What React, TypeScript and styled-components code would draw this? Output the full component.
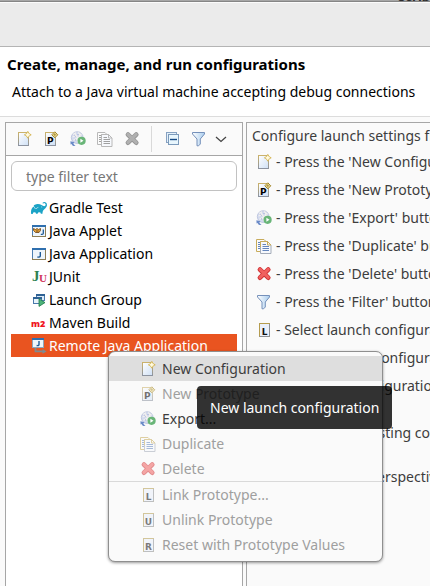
import React, { useState } from "react";
import styled, { createGlobalStyle, css } from "styled-components";
import { SiGradle } from "react-icons/si";

const GlobalStyle = createGlobalStyle`
  *, *::before, *::after { box-sizing: border-box; }
  html, body, #root { height: 100%; margin: 0; }
  body {
    background: #fafafa;
    color: #3d3d3d;
    font-family: "Noto Sans", "Open Sans", sans-serif;
    font-size: 14px;
    line-height: 20px;
    overflow: hidden;
  }
  button, input { font: inherit; color: inherit; }
`;

/* ---------- icons ---------- */

const Svg = styled.svg`
  display: block;
  flex: none;
  width: 16px;
  height: 16px;
`;

type IconProps = { muted?: boolean };

const Star = ({ x, y }: { x: number; y: number }) => (
  <g>
    <path
      d={`M${x} ${y - 3.4}L${x + 1.2} ${y - 1.2}L${x + 3.4} ${y}L${x + 1.2} ${y + 1.2}L${x} ${y + 3.4}L${x - 1.2} ${y + 1.2}L${x - 3.4} ${y}L${x - 1.2} ${y - 1.2}Z`}
      fill="#fdf3c4"
      stroke="#d3b250"
      strokeWidth=".9"
    />
    <path d={`M${x} ${y - 2}V${y + 2}M${x - 2} ${y}H${x + 2}`} stroke="#fffbe8" strokeWidth="1" />
  </g>
);

const Sheet = () => (
  <>
    <defs>
      <linearGradient id="sheetFill" x1="0" y1="0" x2="1" y2="1">
        <stop offset="0" stopColor="#ffffff" />
        <stop offset="1" stopColor="#cfe0f5" />
      </linearGradient>
      <linearGradient id="sheetLine" x1="0" y1="0" x2="0" y2="1">
        <stop offset="0" stopColor="#cbb26b" />
        <stop offset="1" stopColor="#8c93a0" />
      </linearGradient>
    </defs>
    <rect x="2.5" y="1.5" width="10" height="13" fill="url(#sheetFill)" stroke="url(#sheetLine)" />
  </>
);

const NewIcon = () => (
  <Svg viewBox="0 0 16 16" aria-hidden="true">
    <Sheet />
    <Star x={11.8} y={3.8} />
  </Svg>
);

const PrototypeIcon = () => (
  <Svg viewBox="0 0 16 16" aria-hidden="true">
    <Sheet />
    <text x="4" y="13" fontFamily="DejaVu Sans" fontWeight="700" fontSize="9" fill="#000">
      P
    </text>
    <path d="M11.8 .8L14.8 3.8L11.8 6.8L8.8 3.8Z" fill="#fdf3b0" stroke="#9a7a1c" strokeWidth=".9" />
    <path d="M11.8 2V5.6M10 3.8H13.6" stroke="#9a7a1c" strokeWidth=".7" />
  </Svg>
);

const LetterIcon = ({ letter }: { letter: string }) => (
  <Svg viewBox="0 0 16 16" aria-hidden="true">
    <rect x="3.5" y="1.5" width="10" height="13" fill="#eaf0fb" stroke="#b59c4e" />
    <path d="M13.5 2V14.5H3.5" fill="none" stroke="#8c8f94" />
    <text x="8.5" y="13" textAnchor="middle" fontFamily="DejaVu Sans" fontWeight="700" fontSize="9" fill="#111">
      {letter}
    </text>
  </Svg>
);

const ExportIcon = () => (
  <Svg viewBox="0 0 16 16" aria-hidden="true">
    <circle cx="7.2" cy="6.6" r="5.9" fill="#d3daee" stroke="#b6bfdb" strokeWidth=".8" />
    <path
      d="M3 3.5L6 1.6M8 1.5L11.5 4.3M2.6 6L6 4.4L8 7L11 5.6M3.4 9.2L6.6 7.6L8 11M5 2.5L7 5.5M10 2.5L9 6.5"
      stroke="#f3f1ee"
      strokeWidth="1.1"
      fill="none"
    />
    <path d="M4.5 4.5l1 1M7.5 3l1 1M9.5 7l1 1M5 8.5l1.2 1" stroke="#a4afd2" strokeWidth="1" />
    <path d="M.4 10.2L4.6 11.2L3.4 12.2C3.6 13.4 4.6 14.4 6 14.8C3.4 15.3 1.8 14.4 1.7 12.9L.6 13.6Z" fill="#6b8bc8" />
    <circle cx="11.6" cy="9.8" r="4.1" fill="#69b578" />
    <path d="M10.4 7.8L13.5 9.8L10.4 11.8Z" fill="#fff" />
  </Svg>
);

const DuplicateIcon = ({ muted }: IconProps) => {
  const edge = muted ? "#b8b8b8" : "#c8ac5c";
  const side = muted ? "#b8b8b8" : "#a3abb8";
  const line = muted ? "#a0a0a0" : "#6486bd";
  return (
    <Svg viewBox="0 0 16 16" aria-hidden="true">
      <path d="M.5 13.5V1.5H8L10 3.5V13.5Z" fill="#fbfbfb" stroke={edge} />
      <path d="M2 4.5H4M2 6.5H4M2 8.5H4M2 10.5H4" stroke={line} />
      <path d="M4.5 15.5V3.5H11.5L15 7V15.5Z" fill="#f7f9fd" stroke={side} />
      <path d="M4.5 9V3.5H11.5L15 7H11.5V3.5" fill="none" stroke={edge} />
      <path d="M6.5 6.5H10M6.5 8.5H13M6.5 10.5H13M6.5 12.5H13" stroke={line} />
    </Svg>
  );
};

const DeleteIcon = ({ muted }: IconProps) => (
  <Svg viewBox="0 0 16 16" aria-hidden="true">
    <path
      d="M4 3.6L12.2 11.6M12.2 3.6L4 11.6"
      stroke={muted ? "#969696" : "#cf3235"}
      strokeWidth="4.8"
      strokeLinecap="round"
    />
    <path
      d="M4 3.4L12.2 11.4M12.2 3.4L4 11.4"
      stroke={muted ? "#b0b0b0" : "#f0605f"}
      strokeWidth="3"
      strokeLinecap="round"
    />
  </Svg>
);

const CollapseIcon = () => (
  <Svg viewBox="0 0 16 16" aria-hidden="true">
    <rect x="2.5" y="1.5" width="10" height="10" fill="#e4f0fa" stroke="#86a1c1" />
    <rect x="4.5" y="3.5" width="10" height="10" fill="#e8f6fd" stroke="#7c9abb" />
    <path d="M6 8.5H13" stroke="#164a86" strokeWidth="1.4" />
  </Svg>
);

const FilterIcon = () => (
  <Svg viewBox="0 0 16 16" aria-hidden="true">
    <defs>
      <linearGradient id="funnelFill">
        <stop offset="0" stopColor="#ffffff" />
        <stop offset="1" stopColor="#a9cdee" />
      </linearGradient>
    </defs>
    <path
      d="M1.5 1.5H13.5V3L9.3 8V13L7.6 14.8H6V8L1.5 3Z"
      fill="url(#funnelFill)"
      stroke="#7590ba"
      strokeLinejoin="round"
    />
  </Svg>
);

const ChevronIcon = () => (
  <Svg viewBox="0 0 16 16" aria-hidden="true">
    <path d="M3 6L8 10.4L13 6" fill="none" stroke="#444" strokeWidth="1.3" />
  </Svg>
);

const GradleIcon = styled(SiGradle)`
  display: block;
  flex: none;
  width: 16px;
  height: 16px;
  color: #1ba3c6;
`;

const WindowFrame = () => (
  <>
    <rect x="1.5" y="2.5" width="13" height="11" fill="#eef5fb" stroke="#8c7d55" />
    <path d="M1 3H15" stroke="#2f6fae" strokeWidth="2" />
    <path d="M1.5 4V12" stroke="#4c7fb2" />
  </>
);

const AppletIcon = () => (
  <Svg viewBox="0 0 16 16" aria-hidden="true">
    <WindowFrame />
    <path d="M2.5 5.5L4.5 6.5L6 5.5L7.5 6.5L9.5 5.5V7.5L8 9.5H4.5L2.5 7.5Z" fill="#e0a23c" stroke="#6b3f12" strokeWidth=".8" />
    <path d="M5 8H7.5" stroke="#6b3f12" strokeWidth=".8" />
    <path d="M12.3 6.5V10.4Q12.1 11.7 9.8 11.4" fill="none" stroke="#1f5b96" strokeWidth="1.3" />
  </Svg>
);

const ApplicationIcon = () => (
  <Svg viewBox="0 0 16 16" aria-hidden="true">
    <WindowFrame />
    <path d="M9.3 6V10Q9 11.5 6.4 11" fill="none" stroke="#1f5b96" strokeWidth="1.4" />
  </Svg>
);

const JUnitIcon = () => (
  <Svg viewBox="0 0 16 16" aria-hidden="true">
    <text x="1" y="12" fontFamily="Liberation Serif" fontWeight="700" fontSize="15" fill="#2c8152">
      J
    </text>
    <text x="8" y="13" fontFamily="Liberation Serif" fontSize="11" fontWeight="700" fill="#d0355a">
      U
    </text>
  </Svg>
);

const LaunchGroupIcon = () => (
  <Svg viewBox="0 0 16 16" aria-hidden="true">
    <rect x="5.5" y="2.5" width="8" height="6" fill="#dcebf7" stroke="#4a79ab" />
    <path d="M5 3H14" stroke="#2f6295" strokeWidth="2" />
    <rect x="2.5" y="5.5" width="8" height="6" fill="#e8f3fb" stroke="#4a79ab" />
    <path d="M2 6H11" stroke="#2f6295" strokeWidth="2" />
    <path d="M8 6.8L14 10.6L8 14.4Z" fill="#4db37a" stroke="#1d7a46" strokeWidth=".8" />
  </Svg>
);

const MavenIcon = () => (
  <Svg viewBox="0 0 16 16" aria-hidden="true">
    <text x="0" y="12" fontFamily="Open Sans" fontWeight="800" fontSize="9" fill="#f0141e">
      m2
    </text>
  </Svg>
);

const RemoteIcon = () => (
  <Svg viewBox="0 0 16 16" aria-hidden="true">
    <rect x="1.5" y="1.5" width="11" height="8" fill="#eef5fb" stroke="#8ca6bd" />
    <path d="M1 1H13" stroke="#2f6fae" strokeWidth="2" />
    <path d="M8 3V6.6Q7.8 7.9 5.6 7.5" fill="none" stroke="#1f5b96" strokeWidth="1.4" />
    <path d="M4.5 10V13.4H12" fill="none" stroke="#7f8a90" strokeWidth="1.8" />
    <path d="M11.5 11L15.6 13.4L11.5 15.8Z" fill="#7f8a90" />
  </Svg>
);

/* ---------- layout ---------- */

const Page = styled.div`
  display: flex;
  flex-direction: column;
  height: 100vh;
  min-width: 0;
`;

const BackWindow = styled.div`
  display: flex;
  justify-content: flex-end;
  align-items: flex-end;
  flex: none;
  height: 2px;
  overflow: hidden;
  background: #a6a6a6;
  border-bottom: 1px solid #858585;
  color: #2b2b2b;
  font-size: 13px;
  font-weight: 700;
  line-height: 10px;
`;

const TitleBar = styled.div`
  flex: none;
  height: 45px;
  background: #ebebeb;
  border-top: 1px solid #fbfbfb;
  border-bottom: 1px solid #b4b4b4;
`;

const Banner = styled.header`
  flex: none;
  padding: 7px 7px 14px;
  background: #fff;
  border-bottom: 1px solid #dcdcdc;
  color: #000;
  white-space: nowrap;
`;

const BannerTitle = styled.h1`
  margin: 0;
  font-size: 15px;
  font-weight: 700;
  line-height: 20px;
`;

const BannerMessage = styled.p`
  margin: 8px 0 0 5px;
  line-height: 20px;
`;

const Workspace = styled.main`
  display: grid;
  grid-template-columns: minmax(200px, 238px) minmax(0, 1fr);
  gap: 3px;
  flex: 1;
  min-height: 0;
  padding: 5px 0 0 5px;
`;

const TreePanel = styled.section`
  position: relative;
  display: flex;
  flex-direction: column;
  min-width: 0;
  background: #fff;
  border: 1px solid #a6a6a6;
  border-bottom: 0;
`;

const Toolbar = styled.div`
  display: flex;
  align-items: center;
  flex: none;
  gap: 11px;
  height: 33px;
  padding-left: 10px;
  background: #fafafa;
  border-bottom: 1px solid #a6a6a6;
`;

const ToolButton = styled.button<{ $tight?: boolean }>`
  padding: 0;
  border: 0;
  background: none;
  ${(p) => p.$tight && css`margin-left: -5px;`}
`;

const ToolDivider = styled.span`
  width: 1px;
  height: 26px;
  margin-right: 1px;
  background: #d9d9d9;
`;

const FilterInput = styled.input`
  flex: none;
  height: 30px;
  margin: 5px 5px 0;
  padding: 0 14px;
  min-width: 0;
  background: #fff;
  border: 1px solid #c2c2c2;
  border-radius: 6px;
  outline: 0;
  &::placeholder { color: #777; opacity: 1; }
`;

const Tree = styled.ul`
  margin: 5px 5px 0;
  padding: 0;
  list-style: none;
`;

const TreeItem = styled.li<{ $selected?: boolean }>`
  display: flex;
  align-items: center;
  gap: 2px;
  height: 23px;
  padding-left: 20px;
  color: ${(p) => (p.$selected ? "#fff" : "#000")};
  background: ${(p) => (p.$selected ? "#e95420" : "transparent")};
  white-space: nowrap;
`;

const Details = styled.section`
  min-width: 0;
  padding: 3px 0 0 5px;
  border: 1px solid #a6a6a6;
  border-width: 1px 0 0 1px;
  overflow: hidden;
  white-space: nowrap;
`;

const Hint = styled.p`
  margin: 0;
  line-height: 20px;
`;

const HintList = styled.ul`
  margin: 2px 0 0;
  padding: 0;
  list-style: none;
`;

const HintItem = styled.li`
  display: flex;
  align-items: center;
  gap: 4px;
  height: 28px;
  padding-left: 4px;
`;

const HintGroup = styled.div`
  display: flex;
  flex-direction: column;
  gap: 24px;
  padding-top: 23px;
`;

const Menu = styled.div`
  position: absolute;
  z-index: 2;
  top: 228px;
  left: 102px;
  width: 275px;
  padding: 4px 0;
  background: #fafafa;
  border: 1px solid #8f8f8f;
  border-radius: 7px;
  box-shadow: 0 1px 3px rgba(0, 0, 0, 0.4);
`;

const MenuItem = styled.button<{ $active?: boolean }>`
  display: flex;
  align-items: center;
  gap: 6px;
  width: 100%;
  height: 25px;
  padding: 0 0 0 31px;
  border: 0;
  background: ${(p) => (p.$active ? "#dedede" : "transparent")};
  text-align: left;
  white-space: nowrap;
  &:disabled { color: #9f9f9f; }
  &:disabled svg { opacity: 0.55; }
`;

const MenuDivider = styled.hr`
  height: 1px;
  margin: 0;
  border: 0;
  background: #d9d9d9;
`;

const Tooltip = styled.div`
  position: absolute;
  z-index: 3;
  top: 34px;
  left: 88px;
  padding: 12px 13px 11px;
  background: rgba(0, 0, 0, 0.8);
  border-radius: 4px;
  color: #fff;
  white-space: nowrap;
`;

/* ---------- data ---------- */

const tools = [
  { label: "New launch configuration", icon: <NewIcon /> },
  { label: "New prototype", icon: <PrototypeIcon /> },
  { label: "Export", icon: <ExportIcon /> },
  { label: "Duplicate", icon: <DuplicateIcon muted />, disabled: true },
  { label: "Delete", icon: <DeleteIcon muted />, disabled: true },
];

const launchTypes = [
  { name: "Gradle Test", icon: <GradleIcon aria-hidden="true" /> },
  { name: "Java Applet", icon: <AppletIcon /> },
  { name: "Java Application", icon: <ApplicationIcon /> },
  { name: "JUnit", icon: <JUnitIcon /> },
  { name: "Launch Group", icon: <LaunchGroupIcon /> },
  { name: "Maven Build", icon: <MavenIcon /> },
  { name: "Remote Java Application", icon: <RemoteIcon /> },
];

const hints = [
  { icon: <NewIcon />, text: "- Press the 'New Configuration' button" },
  { icon: <PrototypeIcon />, text: "- Press the 'New Prototype' button" },
  { icon: <ExportIcon />, text: "- Press the 'Export' button" },
  { icon: <DuplicateIcon />, text: "- Press the 'Duplicate' button" },
  { icon: <DeleteIcon />, text: "- Press the 'Delete' button" },
  { icon: <FilterIcon />, text: "- Press the 'Filter' button" },
  { icon: <LetterIcon letter="L" />, text: "- Select launch configuration(s)" },
  { icon: <LetterIcon letter="U" />, text: "- Select launch configuration(s)" },
  { icon: <LetterIcon letter="R" />, text: "- Select the configuration" },
];

export default function App() {
  const [filter, setFilter] = useState("");
  const [selected, setSelected] = useState("Remote Java Application");

  return (
    <>
      <GlobalStyle />
      <Page>
        <BackWindow>Scrip</BackWindow>
        <TitleBar />
        <Banner>
          <BannerTitle>Create, manage, and run configurations</BannerTitle>
          <BannerMessage>Attach to a Java virtual machine accepting debug connections</BannerMessage>
        </Banner>
        <Workspace>
          <TreePanel>
            <Toolbar role="toolbar">
              {tools.map((t) => (
                <ToolButton key={t.label} type="button" aria-label={t.label} disabled={t.disabled}>
                  {t.icon}
                </ToolButton>
              ))}
              <ToolDivider />
              <ToolButton type="button" aria-label="Collapse all">
                <CollapseIcon />
              </ToolButton>
              <ToolButton type="button" aria-label="Filter">
                <FilterIcon />
              </ToolButton>
              <ToolButton type="button" aria-label="Filter options" $tight>
                <ChevronIcon />
              </ToolButton>
            </Toolbar>
            <FilterInput
              type="text"
              aria-label="Filter text"
              placeholder="type filter text"
              value={filter}
              onChange={(e) => setFilter(e.target.value)}
            />
            <Tree role="tree">
              {launchTypes.map((t) => (
                <TreeItem
                  key={t.name}
                  role="treeitem"
                  aria-selected={t.name === selected}
                  $selected={t.name === selected}
                  onClick={() => setSelected(t.name)}
                >
                  {t.icon}
                  {t.name}
                </TreeItem>
              ))}
            </Tree>
            <Menu role="menu">
              <MenuItem type="button" role="menuitem" $active>
                <NewIcon />
                New Configuration
              </MenuItem>
              <MenuItem type="button" role="menuitem" disabled>
                <PrototypeIcon />
                New Prototype
              </MenuItem>
              <MenuItem type="button" role="menuitem">
                <ExportIcon />
                Export...
              </MenuItem>
              <MenuItem type="button" role="menuitem" disabled>
                <DuplicateIcon />
                Duplicate
              </MenuItem>
              <MenuItem type="button" role="menuitem" disabled>
                <DeleteIcon />
                Delete
              </MenuItem>
              <MenuDivider />
              <MenuItem type="button" role="menuitem" disabled>
                <LetterIcon letter="L" />
                Link Prototype...
              </MenuItem>
              <MenuItem type="button" role="menuitem" disabled>
                <LetterIcon letter="U" />
                Unlink Prototype
              </MenuItem>
              <MenuItem type="button" role="menuitem" disabled>
                <LetterIcon letter="R" />
                Reset with Prototype Values
              </MenuItem>
              <Tooltip role="tooltip">New launch configuration</Tooltip>
            </Menu>
          </TreePanel>
          <Details>
            <Hint>Configure launch settings from this dialog:</Hint>
            <HintList>
              {hints.map((h, i) => (
                <HintItem key={i}>
                  {h.icon}
                  {h.text}
                </HintItem>
              ))}
            </HintList>
            <HintGroup>
              <Hint>- Edit or view an existing configuration by selecting it.</Hint>
              <Hint>Configure launch perspective settings</Hint>
            </HintGroup>
          </Details>
        </Workspace>
      </Page>
    </>
  );
}
